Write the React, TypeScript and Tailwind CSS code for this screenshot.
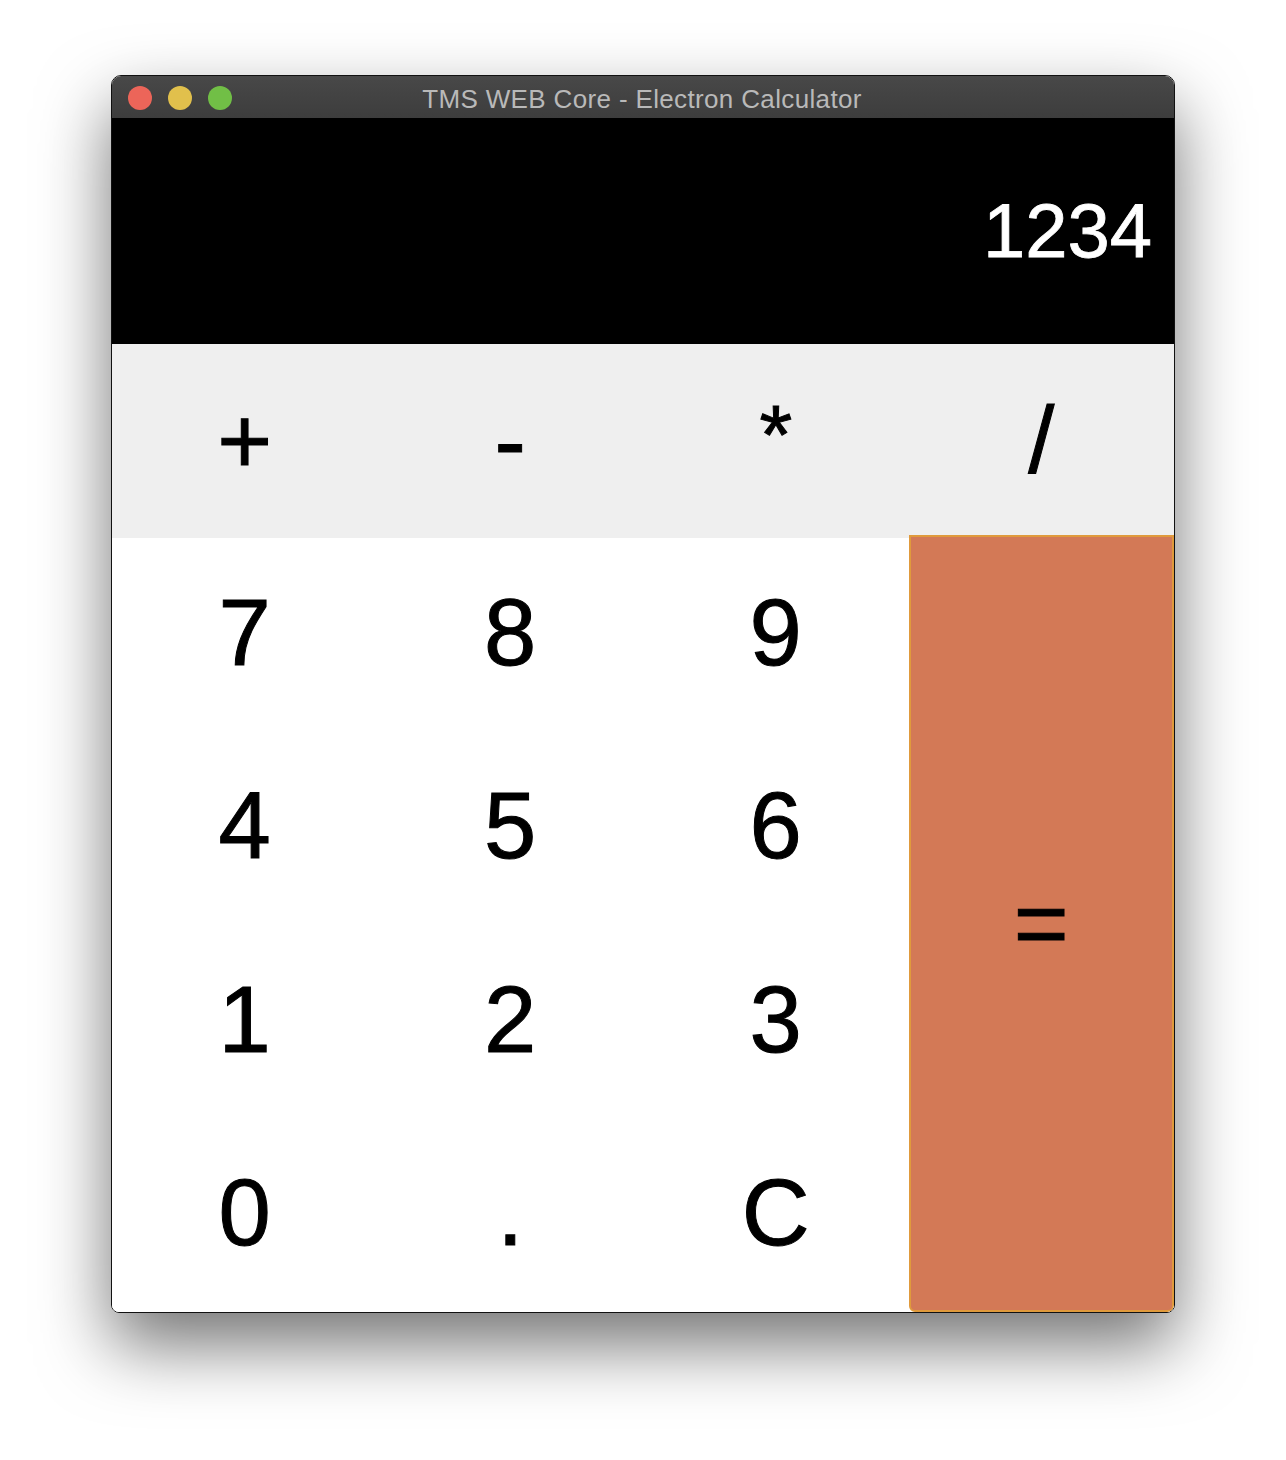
import React, { useState } from 'react'

const ops = ['+', '-', '*', '/']
const keys = ['7', '8', '9', '4', '5', '6', '1', '2', '3', '0', '.', 'C']

const App = () => {
  const [display, setDisplay] = useState('1234')

  const press = (k: string) => {
    if (k === 'C') {
      setDisplay('0')
      return
    }
    setDisplay((d) => (d === '0' ? k : d + k))
  }

  return (
    <div className="min-h-[1460px] w-[1286px] bg-white pl-[111px] pt-[75px]">
      <div
        className="flex w-[1064px] flex-col overflow-hidden rounded-t-[10px] rounded-b-[8px] border border-[#111] shadow-[0_32px_70px_rgba(0,0,0,0.55)]"
        style={{ fontFamily: '"Liberation Sans", Arial, sans-serif' }}
      >
        {/* title bar */}
        <div className="relative flex h-[42px] items-center bg-gradient-to-b from-[#484848] to-[#3d3d3d]">
          <div className="flex gap-[16px] pl-[16px] pt-[1px]">
            <span className="h-[24px] w-[24px] rounded-full bg-[#ec6559]" />
            <span className="h-[24px] w-[24px] rounded-full bg-[#e1c04c]" />
            <span className="h-[24px] w-[24px] rounded-full bg-[#71bf46]" />
          </div>
          <div className="absolute inset-0 flex items-center justify-center pr-[2px] pt-[5px] text-[26px] tracking-[0.35px] text-[#b9b9b9]">
            TMS WEB Core - Electron Calculator
          </div>
        </div>

        {/* display */}
        <div className="flex h-[226px] items-center justify-end bg-black pr-[22px] text-[76px] leading-none text-white [-webkit-text-stroke:0.8px_white]">
          {display}
        </div>

        {/* operators */}
        <div className="grid h-[194px] grid-cols-4 bg-[#efefef]">
          {ops.map((o) => (
            <button
              key={o}
              onClick={() => press(o)}
              className="flex items-center justify-center text-[94px] leading-none text-black [-webkit-text-stroke:1px_black]"
            >
              <span className={o === '*' ? '-mt-[12px] text-[84px]' : ''}>{o}</span>
            </button>
          ))}
        </div>

        {/* numbers + equals */}
        <div className="grid h-[774px] grid-cols-4 grid-rows-4 bg-white">
          {keys.slice(0, 3).map((k) => (
            <button key={k} onClick={() => press(k)} className="flex items-center justify-center pb-[4px] text-[94px] leading-none text-black [-webkit-text-stroke:1px_black]">
              {k}
            </button>
          ))}
          <button
            onClick={() => press('=')}
            className="row-span-4 -mt-[3px] flex items-center justify-center rounded-b-[6px] border-2 border-[#e09a3c] bg-[#d37956] text-[94px] leading-none text-black [-webkit-text-stroke:1px_black]"
          >
            =
          </button>
          {keys.slice(3).map((k) => (
            <button key={k} onClick={() => press(k)} className="flex items-center justify-center pb-[4px] text-[94px] leading-none text-black [-webkit-text-stroke:1px_black]">
              {k}
            </button>
          ))}
        </div>
      </div>
    </div>
  )
}

export default App
